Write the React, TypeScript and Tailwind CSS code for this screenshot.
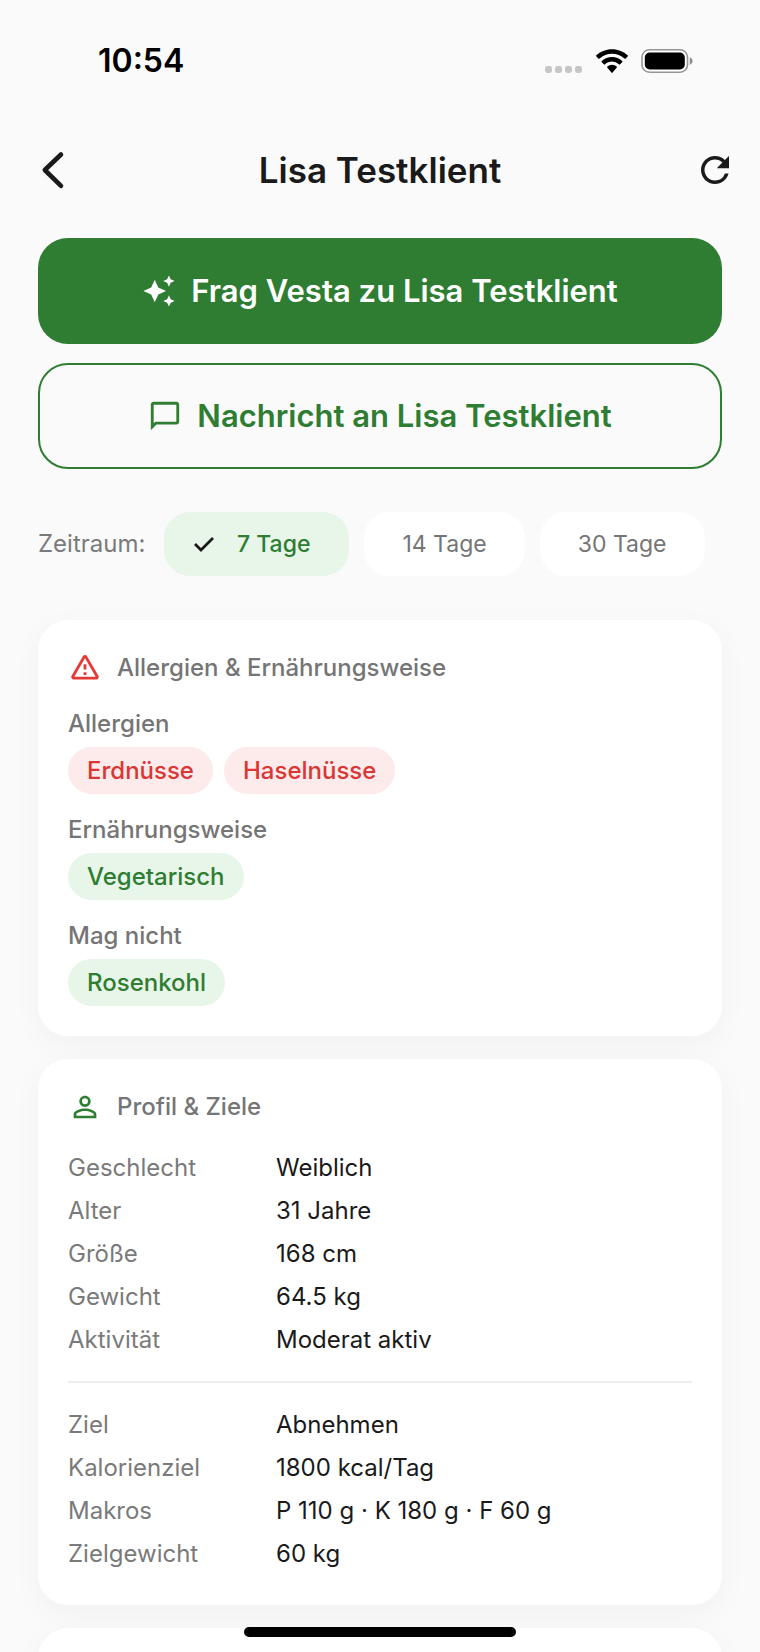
import { useState } from "react";

const periods = [
  { label: "7 Tage", days: 7 },
  { label: "14 Tage", days: 14 },
  { label: "30 Tage", days: 30 },
];

const dietGroups = [
  { label: "Allergien", tone: "red", items: ["Erdnüsse", "Haselnüsse"] },
  { label: "Ernährungsweise", tone: "green", items: ["Vegetarisch"] },
  { label: "Mag nicht", tone: "green", items: ["Rosenkohl"] },
];

const profileRows = [
  { label: "Geschlecht", value: "Weiblich" },
  { label: "Alter", value: "31 Jahre" },
  { label: "Größe", value: "168 cm" },
  { label: "Gewicht", value: "64.5 kg" },
  { label: "Aktivität", value: "Moderat aktiv" },
];

const goalRows = [
  { label: "Ziel", value: "Abnehmen" },
  { label: "Kalorienziel", value: "1800 kcal/Tag" },
  { label: "Makros", value: "P 110 g · K 180 g · F 60 g" },
  { label: "Zielgewicht", value: "60 kg" },
];

type Row = { label: string; value: string };

function StatusBar() {
  return (
    <div className="flex h-[122px] shrink-0 items-center justify-between pl-[98px] pr-[67px] text-black">
      <span className="text-[32px] font-semibold leading-10">10:54</span>
      <div className="flex items-center gap-[13px]">
        <svg className="h-6 w-[38px]" viewBox="0 0 38 24" fill="#c6c6c6">
          <rect x="0" y="17" width="7" height="7" rx="2.4" />
          <rect x="10" y="17" width="7" height="7" rx="2.4" />
          <rect x="20" y="17" width="7" height="7" rx="2.4" />
          <rect x="30" y="17" width="7" height="7" rx="2.4" />
        </svg>
        <svg className="h-6 w-8" viewBox="0 0 32 24">
          <path d="M16 .2C22.100 .2 27.600 2.500 31.600 6.300a.8.800 0 0 1 0 1.200l-2 2.100a.8.800 0 0 1-1.200 0A18 18 0 0 0 16 4.700 18 18 0 0 0 3.600 9.600a.8.800 0 0 1-1.200 0l-2-2.100a.8.800 0 0 1 0-1.200C4.400 2.500 9.900 .2 16 .2z" />
          <path d="M16 8c3.900 0 7.500 1.500 10.200 4a.8.800 0 0 1 0 1.200l-2.100 2.100a.8.800 0 0 1-1.200 0A10.300 10.300 0 0 0 16 12.500c-2.600 0-5.100 1-6.900 2.800a.8.800 0 0 1-1.200 0l-2.100-2.100a.8.800 0 0 1 0-1.200A15 15 0 0 1 16 8z" />
          <path d="M16 15.800c1.800 0 3.400.7 4.600 1.800a.8.800 0 0 1 0 1.200l-4 4.600a.8.800 0 0 1-1.200 0l-4-4.600a.8.800 0 0 1 0-1.200A6.700 6.700 0 0 1 16 15.800z" />
        </svg>
        <svg className="h-6 w-[52px]" viewBox="0 0 52 24">
          <rect x="1" y="0.800" width="45.500" height="22.400" rx="7.500" fill="#fff" stroke="#959595" strokeWidth="1.600" />
          <rect x="3.800" y="3.600" width="40" height="16.800" rx="5" />
          <path d="M48.800 8.200c1.700.7 2.700 2.100 2.700 3.800s-1 3.100-2.700 3.800z" fill="#8c8c8c" />
        </svg>
      </div>
    </div>
  );
}

function CardTitle({ icon, children }: { icon: React.ReactNode; children: React.ReactNode }) {
  return (
    <h2 className="mb-[21px] flex items-center gap-[15px] text-[24px] font-medium leading-[36px] text-[#757575]">
      {icon}
      {children}
    </h2>
  );
}

function RowList({ rows }: { rows: Row[] }) {
  return (
    <dl>
      {rows.map((row) => (
        <div key={row.label} className="flex text-[24px] leading-[43px]">
          <dt className="w-[208px] shrink-0 text-[#7a7a7a]">{row.label}</dt>
          <dd className="text-[#1a1a1a]">{row.value}</dd>
        </div>
      ))}
    </dl>
  );
}

export default function App() {
  const [days, setDays] = useState(7);

  return (
    <div className="relative flex h-screen flex-col overflow-hidden bg-[#fafafa] font-['Inter',sans-serif]">
      <StatusBar />

      {/* App bar */}
      <header className="flex h-24 shrink-0 items-center justify-between pl-10 pr-6 text-[#1a1a1a]">
        <button aria-label="Zurück" className="flex w-[26px] justify-center">
          <svg className="h-10 w-6" viewBox="0 0 24 40" fill="none" stroke="currentColor" strokeWidth="4.600" strokeLinecap="round" strokeLinejoin="round">
            <path d="M20 4.500 3.800 20 20 35.800" />
          </svg>
        </button>
        <h1 className="text-[35px] font-semibold leading-[50px]">Lisa Testklient</h1>
        <button aria-label="Aktualisieren">
          <svg className="size-[42px]" viewBox="0 0 24 24" fill="currentColor">
            <path d="M17.650 6.350A7.958 7.958 0 0 0 12 4c-4.420 0-7.990 3.580-7.990 8s3.570 8 7.990 8c3.730 0 6.840-2.550 7.730-6h-2.080A5.990 5.990 0 0 1 12 18c-3.310 0-6-2.690-6-6s2.690-6 6-6c1.660 0 3.140.69 4.220 1.780L13 11h7V4l-2.350 2.350z" />
          </svg>
        </button>
      </header>

      <main className="min-h-0 flex-1 overflow-y-auto px-[38px] pt-5 [scrollbar-width:none]">
        {/* Actions */}
        <div className="space-y-[19px] text-[31px] font-semibold">
          <button className="flex h-[106px] w-full items-center justify-center gap-[15px] rounded-[30px] bg-[#2e7d32] text-white">
            <svg className="size-[34px]" viewBox="0 0 24 24" fill="currentColor">
              <path d="m19 9 1.250-2.750L23 5l-2.750-1.250L19 1l-1.250 2.750L15 5l2.750 1.250L19 9zm-7.500.5L9 4 6.500 9.500 1 12l5.500 2.500L9 20l2.500-5.500L17 12l-5.500-2.500zM19 15l-1.250 2.750L15 19l2.750 1.250L19 23l1.250-2.750L23 19l-2.750-1.250L19 15z" />
            </svg>
            Frag Vesta zu Lisa Testklient
          </button>
          <button className="flex h-[106px] w-full items-center justify-center gap-[15px] rounded-[30px] border-2 border-[#2e7d32] text-[#2e7d32]">
            <svg className="size-[34px]" viewBox="0 0 24 24" fill="currentColor">
              <path d="M20 2H4c-1.100 0-2 .9-2 2v18l4-4h14c1.100 0 2-.9 2-2V4c0-1.100-.9-2-2-2zm0 14H5.200L4 17.200V4h16v12z" />
            </svg>
            Nachricht an Lisa Testklient
          </button>
        </div>

        {/* Period filter */}
        <div className="mt-[43px] flex items-center">
          <span className="w-[126px] text-[24px] text-[#7a7a7a]">Zeitraum:</span>
          <div className="flex gap-[15px] text-[23px]">
            {periods.map((period) => {
              const active = period.days === days;
              return (
                <button
                  key={period.days}
                  onClick={() => setDays(period.days)}
                  aria-pressed={active}
                  className={`flex h-16 items-center rounded-[26px] ${
                    active
                      ? "bg-[#e8f5e9] pl-[30px] pr-[39px] font-medium text-[#2e7d32]"
                      : "bg-white px-[38px] text-[#757575]"
                  }`}
                >
                  {active && (
                    <svg className="mr-[23px] h-4 w-5" viewBox="0 0 20 16" fill="none" stroke="#1a1a1a" strokeWidth="2.800">
                      <path d="m1 8 6 6L19 2" />
                    </svg>
                  )}
                  {period.label}
                </button>
              );
            })}
          </div>
        </div>

        <div className="mt-11 space-y-[23px]">
          <section className="rounded-[30px] bg-white p-[30px] shadow-[0_8px_30px_rgba(0,0,0,0.04)]">
            <CardTitle
              icon={
                <svg className="size-[34px] text-[#e53935]" viewBox="0 0 24 24" fill="none" stroke="currentColor" strokeWidth="2" strokeLinejoin="round">
                  <path d="M11.300 4.300a.8.800 0 0 1 1.400 0l7.900 13.700a.8.800 0 0 1-.7 1.200H4.100a.8.800 0 0 1-.7-1.200z" />
                  <path d="M12 9.300v3.700M12 15v2" />
                </svg>
              }
            >
              Allergien &amp; Ernährungsweise
            </CardTitle>
            <div className="space-y-[19px]">
              {dietGroups.map((group) => (
                <div key={group.label}>
                  <h3 className="mb-1.5 text-[24px] font-medium leading-[34px] text-[#757575]">{group.label}</h3>
                  <ul className="flex gap-[11px]">
                    {group.items.map((item) => (
                      <li
                        key={item}
                        className={`rounded-full px-[19px] text-[24px] font-medium leading-[47px] ${
                          group.tone === "red" ? "bg-[#fdeaea] text-[#d93636]" : "bg-[#e8f5e9] text-[#2e7d32]"
                        }`}
                      >
                        {item}
                      </li>
                    ))}
                  </ul>
                </div>
              ))}
            </div>
          </section>

          <section className="rounded-[30px] bg-white p-[30px] shadow-[0_8px_30px_rgba(0,0,0,0.04)]">
            <CardTitle
              icon={
                <svg className="size-[34px] text-[#2e7d32]" viewBox="0 0 24 24" fill="currentColor">
                  <path d="M12 5.900a2.100 2.100 0 1 1 0 4.200 2.100 2.100 0 0 1 0-4.200m0 9c2.970 0 6.100 1.460 6.100 2.100v1.100H5.900V17c0-.64 3.130-2.100 6.100-2.100M12 4C9.790 4 8 5.790 8 8s1.790 4 4 4 4-1.790 4-4-1.790-4-4-4zm0 9c-2.670 0-8 1.340-8 4v3h16v-3c0-2.660-5.330-4-8-4z" />
                </svg>
              }
            >
              Profil &amp; Ziele
            </CardTitle>
            <RowList rows={profileRows} />
            <hr className="my-5 border-t-2 border-[#eeeeee]" />
            <RowList rows={goalRows} />
          </section>

          <section className="min-h-40 rounded-[30px] bg-white p-[30px] shadow-[0_8px_30px_rgba(0,0,0,0.04)]" />
        </div>
      </main>

      {/* Home indicator */}
      <div className="absolute bottom-[15px] left-1/2 h-2.5 w-[272px] -translate-x-1/2 rounded-full bg-black" />
    </div>
  );
}
